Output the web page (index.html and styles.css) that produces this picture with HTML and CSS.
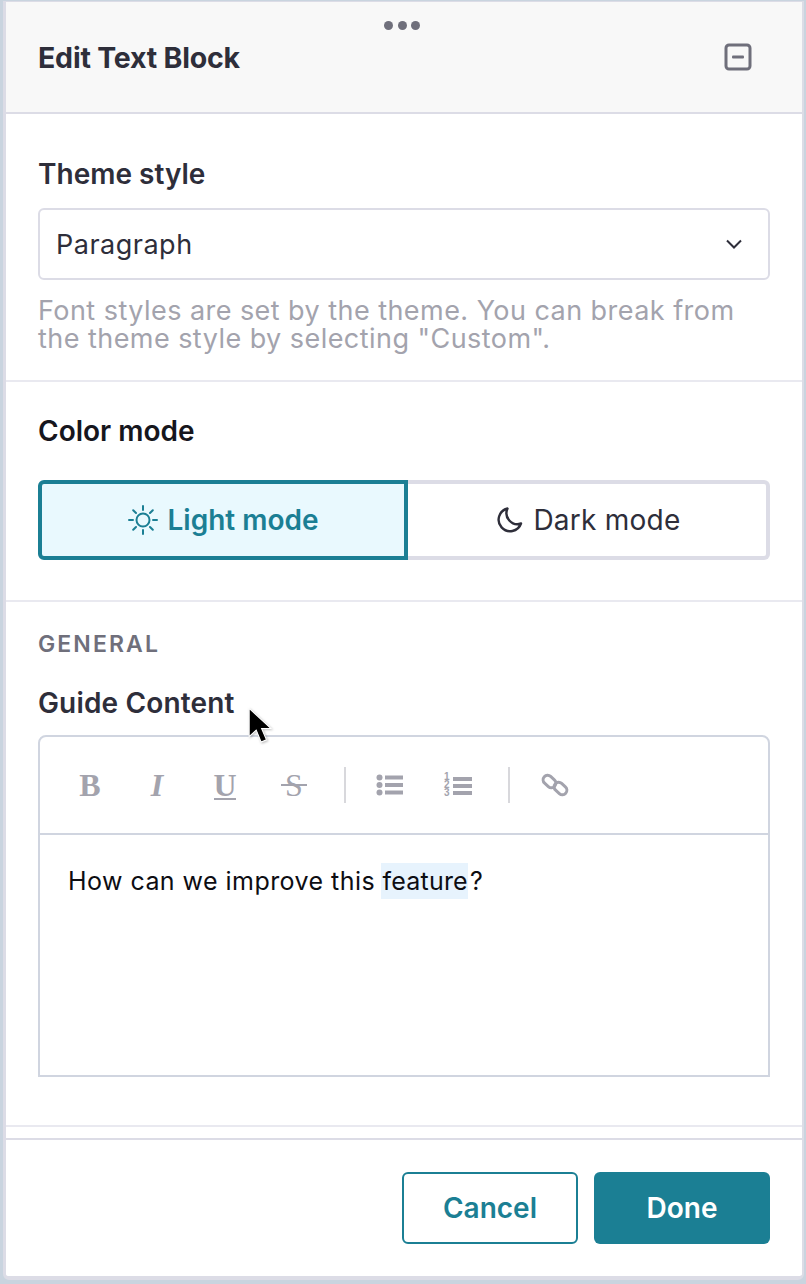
FILE: index.html
```html
<!DOCTYPE html>
<html lang="en">
<head>
<meta charset="utf-8">
<title>Edit Text Block</title>
<link rel="stylesheet" href="styles.css">
</head>
<body>
<div class="panel">
  <header class="head">
    <div class="grip"><i></i><i></i><i></i></div>
    <h1 class="title">Edit Text Block</h1>
    <svg class="collapse" viewBox="0 0 28 28" width="28" height="28"><rect x="2" y="2" width="24" height="24" rx="3" fill="none" stroke="#6f6f7b" stroke-width="3"/><rect x="8" y="12.5" width="12" height="3" rx="1" fill="#6f6f7b"/></svg>
  </header>
  <section class="sec sec-theme">
    <div class="label">Theme style</div>
    <div class="select">
      <span>Paragraph</span>
      <svg viewBox="0 0 16 10" width="16" height="10"><path d="M1 1.5 8 8.5 15 1.5" fill="none" stroke="#2e2e3a" stroke-width="2"/></svg>
    </div>
    <p class="hint">Font styles are set by the theme. You can break from the theme style by selecting "Custom".</p>
  </section>
  <section class="sec sec-mode">
    <div class="label label-dark">Color mode</div>
    <div class="toggle">
      <div class="opt on">
        <svg viewBox="0 0 32 32" width="32" height="32" fill="none" stroke="#1b7f94" stroke-width="2" stroke-linecap="round"><circle cx="16" cy="16" r="6.5"/><path d="M16 2v4M16 26v4M2 16h4M26 16h4M6.2 6.2 9 9M23 23l2.800 2.800M6.200 25.800 9 23M23 9l2.800-2.800"/></svg>
        <span>Light mode</span>
      </div>
      <div class="opt off">
        <svg viewBox="0 0 28 28" width="28" height="28" fill="none" stroke="#2e2e3a" stroke-width="2.400" stroke-linecap="round" stroke-linejoin="round"><path d="M12.500 2.500A11.500 11.500 0 1 0 26 17.500 11 11 0 0 1 12.500 2.500Z"/></svg>
        <span>Dark mode</span>
      </div>
    </div>
  </section>
  <section class="sec sec-general">
    <div class="eyebrow">GENERAL</div>
    <div class="label label-guide">Guide Content</div>
    <div class="editor">
      <div class="tools">
        <span class="t t-b">B</span>
        <span class="t t-i">I</span>
        <span class="t t-u">U</span>
        <span class="t t-s">S</span>
        <span class="sep"></span>
        <svg class="ic-ul" viewBox="0 0 28 22" width="28" height="22" fill="#a3a3ad"><circle cx="3.500" cy="3.500" r="3"/><circle cx="3.500" cy="11" r="3"/><circle cx="3.500" cy="18.500" r="3"/><rect x="9" y="1.500" width="18" height="4"/><rect x="9" y="9" width="18" height="4"/><rect x="9" y="16.500" width="18" height="4"/></svg>
        <span class="nums"><span class="digits">1 2 3</span><svg viewBox="0 0 19 22" width="19" height="22" fill="#a3a3ad"><rect y="3" width="19" height="4"/><rect y="10" width="19" height="4"/><rect y="17" width="19" height="4"/></svg></span>
        <span class="sep sep2"></span>
        <svg class="ic-link" viewBox="0 0 28 28" width="28" height="28" fill="none" stroke="#a3a3ad" stroke-width="3"><rect x="1.500" y="6" width="14" height="9" rx="4.500" transform="rotate(42 8.500 10.500)"/><rect x="12.500" y="13" width="14" height="9" rx="4.500" transform="rotate(42 19.500 17.500)"/></svg>
      </div>
      <div class="body-text">How can we improve this <span class="hl">feature</span>?</div>
    </div>
    <svg class="cursor" viewBox="0 0 24 40" width="26" height="44"><path d="M2 1v26l6.500-6 4.500 11 5-2-4.500-10.500H22Z" fill="#000" stroke="#fff" stroke-width="1"/></svg>
  </section>
  <div class="spacer"></div>
  <footer class="foot">
    <button class="btn ghost">Cancel</button>
    <button class="btn solid">Done</button>
  </footer>
</div>
</body>
</html>
```

FILE: styles.css
```css
* { box-sizing: border-box; }
html, body { margin: 0; height: 100%; }
body {
  background: #c9d4df;
  padding: 1px 2px 4px 3px;
  font-family: Inter, "Liberation Sans", sans-serif;
  color: #2e2e3a;
  overflow: hidden;
}
.panel {
  background: #fff;
  border: 1px solid #dcdce6;
  border-width: 1px 2px 4px 3px;
  height: 1279px;
  border-radius: 0 0 6px 6px;
}
.head {
  position: relative;
  height: 112px;
  background: #f8f8f8;
  border-bottom: 2px solid #dcdce6;
  display: flex;
  align-items: flex-start;
  justify-content: space-between;
  padding: 37px 50px 0 32px;
}
.grip { position: absolute; left: 378px; top: 19px; display: flex; gap: 4.500px; }
.grip i { width: 9px; height: 9px; border-radius: 50%; background: #6f6f7b; display: block; }
.title { margin: 0; font-size: 28.500px; line-height: 38px; font-weight: 700; letter-spacing: -0.2px; color: #2e2e3a; }
.collapse { display: block; margin-top: 4px; }
.sec { padding: 0 32px; border-bottom: 2px solid #e9e9f0; }
.sec-theme { height: 268px; padding-top: 43px; }
.label { font-size: 28px; line-height: 34px; font-weight: 600; }
.label-dark { color: #16161d; }
.select {
  margin-top: 17px;
  height: 72px;
  border: 2px solid #dcdce6;
  border-radius: 6px;
  display: flex;
  align-items: center;
  justify-content: space-between;
  padding: 0 26px 0 16px;
  font-size: 27px;
  letter-spacing: 0.500px;
}
.hint { margin: 17px 0 0; font-size: 27px; line-height: 28px; color: #a3a3ad; letter-spacing: 0.450px; }
.sec-mode { height: 220px; padding-top: 32px; }
.toggle { margin-top: 32px; display: flex; height: 80px; }
.opt { display: flex; align-items: center; justify-content: center; gap: 8px; font-size: 28px; height: 80px; }
.on { width: 370px; background: #e9f9fe; border: 4px solid #1b7f94; border-radius: 6px 0 0 6px; color: #1b7f94; font-weight: 600; }
.off { width: 362px; border: 4px solid #dcdce6; border-left: 0; border-radius: 0 6px 6px 0; letter-spacing: 0.250px; gap: 10px; padding-left: 2px; }
.sec-general { position: relative; height: 525px; padding-top: 27px; }
.eyebrow { font-size: 23px; line-height: 30px; font-weight: 600; letter-spacing: 2.100px; color: #6f6f7b; }
.label-guide { margin-top: 27px; letter-spacing: 0.150px; }
.editor { margin-top: 15px; height: 342px; border: 2px solid #d0d5e0; border-radius: 8px 8px 0 0; }
.tools { height: 98px; border-bottom: 2px solid #d0d5e0; display: flex; align-items: center; padding-left: 38px; color: #a3a3ad; }
.t { position: relative; font-family: "Liberation Serif", serif; font-size: 32px; line-height: 36px; width: 24px; text-align: center; display: block; }
.t-b { font-weight: 700; }
.t-i { font-style: italic; font-weight: 700; margin-left: 43px; }
.t-u { font-weight: 700; margin-left: 44px; }
.t-u::after { content: ""; position: absolute; left: 1px; right: 1px; bottom: 3px; height: 2px; background: #a3a3ad; }
.t-s { margin-left: 45px; }
.t-s::after { content: ""; position: absolute; left: -1px; right: -1px; top: 17px; height: 2px; background: #a3a3ad; }
.sep { width: 2px; height: 36px; background: #d8d8dc; margin-left: 38px; }
.ic-ul { margin-left: 30px; }
.nums { display: flex; align-items: center; margin-left: 40px; }
.digits { display: block; width: 9px; font-family: "Liberation Sans", sans-serif; font-size: 10px; line-height: 8px; font-weight: 700; color: #a3a3ad; }
.sep2 { margin-left: 36px; }
.ic-link { margin-left: 31px; }
.body-text { padding: 28px 28px 0; font-size: 25px; line-height: 36px; color: #0d0d12; letter-spacing: 0.450px; }
.hl { background: #e7f3fd; padding: 3px 0 3px 2px; margin-left: -2px; margin-right: 2px; letter-spacing: 0.200px; }
.cursor { position: absolute; left: 241px; top: 105px; filter: drop-shadow(1px 1px 1px rgba(0, 0, 0, 0.25)); }
.spacer { height: 13px; border-bottom: 2px solid #dcdce6; }
.foot { display: flex; justify-content: flex-end; gap: 16px; padding: 32px 32px 0 0; }
.btn { width: 176px; height: 72px; border-radius: 6px; font: 600 28px Inter, "Liberation Sans", sans-serif; }
.ghost { background: #fff; border: 2px solid #1b7f94; color: #1b7f94; }
.solid { background: #1b7f94; border: 0; color: #fff; }
```
